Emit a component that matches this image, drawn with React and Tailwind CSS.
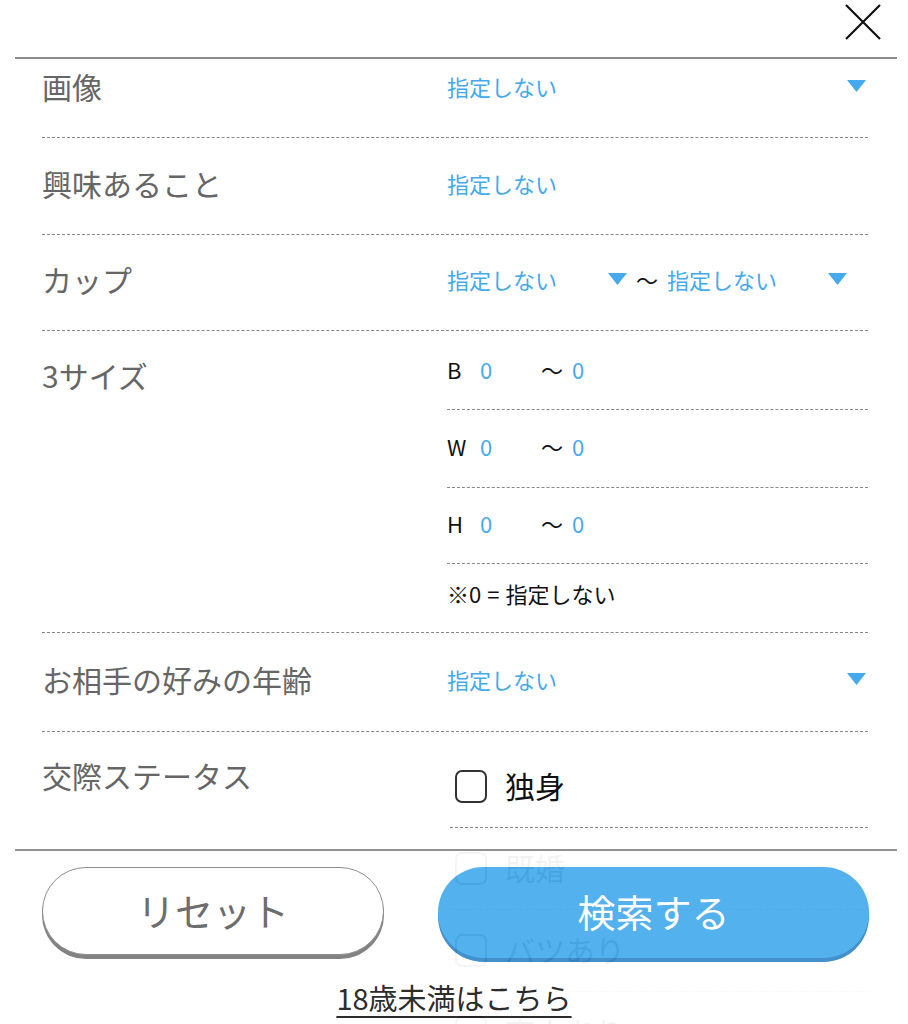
import React from "react";

function Arrow() {
  return (
    <svg width="19" height="12" viewBox="0 0 19 12" className="shrink-0">
      <path d="M0 0H19L9.5 12Z" fill="#45a9ee" />
    </svg>
  );
}

function CloseIcon() {
  return (
    <svg width="38" height="38" viewBox="0 0 38 38">
      <path d="M2 2L36 36M36 2L2 36" stroke="#111" strokeWidth="2.2" fill="none" />
    </svg>
  );
}

function SizeRow({ letter, h, last }) {
  return (
    <div
      className={`flex items-center pb-[6px] leading-none ${h} ${last ? "" : "border-b border-dashed border-[#888]"}`}
    >
      <span className="w-[33px] text-[22px] text-[#111]">{letter}</span>
      <span className="w-[61px] text-[22px] text-[#45a9ee]">0</span>
      <span className="w-[31px] text-[22px] text-[#111]">〜</span>
      <span className="text-[22px] text-[#45a9ee]">0</span>
    </div>
  );
}

function CheckItem({ label }) {
  return (
    <div className="flex h-[82px] items-center border-b border-dashed border-[#888] pl-[5px]">
      <span className="h-[33px] w-[32px] rounded-[7px] border-2 border-[#333] bg-white" />
      <span className="ml-[18px] pb-[4px] text-[30px] leading-none text-[#111]">{label}</span>
    </div>
  );
}

export default function App() {
  return (
    <div className="min-h-screen bg-white font-['Noto_Sans_CJK_JP','Liberation_Sans',sans-serif]">
      {/* header */}
      <div className="flex h-[57px] items-start justify-end pr-[26px] pt-[3px]">
        <button>
          <CloseIcon />
        </button>
      </div>
      <div className="ml-[15px] mr-[11px] h-[2px] bg-[#8c8c8c]" />

      <div className="ml-[42px] mr-[40px] pb-[200px] leading-none">
        {/* 画像 */}
        <div className="flex h-[79px] items-center border-b border-dashed border-[#888] pb-[25px]">
          <div className="w-[405px] text-[30px] text-[#666]">画像</div>
          <div className="flex flex-1 items-center justify-between pr-[2px]">
            <span className="text-[22px] text-[#45a9ee]">指定しない</span>
            <Arrow />
          </div>
        </div>

        {/* 興味あること */}
        <div className="flex h-[97px] items-center border-b border-dashed border-[#888] pb-[7px]">
          <div className="w-[405px] text-[30px] text-[#666]">興味あること</div>
          <span className="text-[22px] text-[#45a9ee]">指定しない</span>
        </div>

        {/* カップ */}
        <div className="flex h-[96px] items-center border-b border-dashed border-[#888] pb-[7px]">
          <div className="w-[405px] text-[30px] text-[#666]">カップ</div>
          <div className="flex items-center">
            <div className="flex w-[180px] items-center justify-between">
              <span className="text-[22px] text-[#45a9ee]">指定しない</span>
              <Arrow />
            </div>
            <span className="mx-[9px] text-[22px] text-[#111]">〜</span>
            <div className="flex w-[180px] items-center justify-between">
              <span className="text-[22px] text-[#45a9ee]">指定しない</span>
              <Arrow />
            </div>
          </div>
        </div>

        {/* 3サイズ */}
        <div className="flex border-b border-dashed border-[#888]">
          <div className="flex h-[95px] w-[405px] items-center pb-[7px] text-[30px] text-[#666]">3サイズ</div>
          <div className="flex-1">
            <div className="pt-[4px]">
              <SizeRow letter="B" h="h-[75px]" />
            </div>
            <SizeRow letter="W" h="h-[78px]" />
            <SizeRow letter="H" h="h-[76px]" />
            <div className="flex h-[68px] items-center pb-[10px] text-[22px] text-[#111]">
              ※0<span className="mx-[6px]">=</span>指定しない
            </div>
          </div>
        </div>

        {/* お相手の好みの年齢 */}
        <div className="flex h-[99px] items-center border-b border-dashed border-[#888] pb-[7px]">
          <div className="w-[405px] text-[30px] text-[#666]">お相手の好みの年齢</div>
          <div className="flex flex-1 items-center justify-between pr-[2px]">
            <span className="text-[22px] text-[#45a9ee]">指定しない</span>
            <Arrow />
          </div>
        </div>

        {/* 交際ステータス */}
        <div className="flex">
          <div className="flex h-[95px] w-[408px] items-center pb-[9px] text-[30px] text-[#666]">交際ステータス</div>
          <div className="flex-1 pt-[14px]">
            <CheckItem label="独身" />
            <CheckItem label="既婚" />
            <CheckItem label="バツあり" />
            <CheckItem label="恋人あり" />
          </div>
        </div>
      </div>

      {/* footer */}
      <div className="fixed inset-x-0 bottom-0 h-[175px] bg-white opacity-[0.95]">
        <div className="ml-[15px] mr-[11px] h-[2px] bg-[#8c8c8c]" />
        <div className="flex gap-[54px] pl-[42px] pr-[39px] pt-[16px]">
          <button className="h-[88px] w-[342px] rounded-full border border-[#888] bg-white pb-[4px] text-[38px] text-[#666] shadow-[0_4px_0_#7d7d7d]">
            リセット
          </button>
          <button className="h-[91px] flex-1 rounded-full bg-[#4aadee] pb-[4px] text-[38px] text-white shadow-[0_4px_0_#3a8bc9]">
            検索する
          </button>
        </div>
        <div className="mt-[18px] text-center">
          <a className="text-[29px] text-[#222] underline decoration-2 underline-offset-[6px]">
            18歳未満はこちら
          </a>
        </div>
      </div>
    </div>
  );
}
